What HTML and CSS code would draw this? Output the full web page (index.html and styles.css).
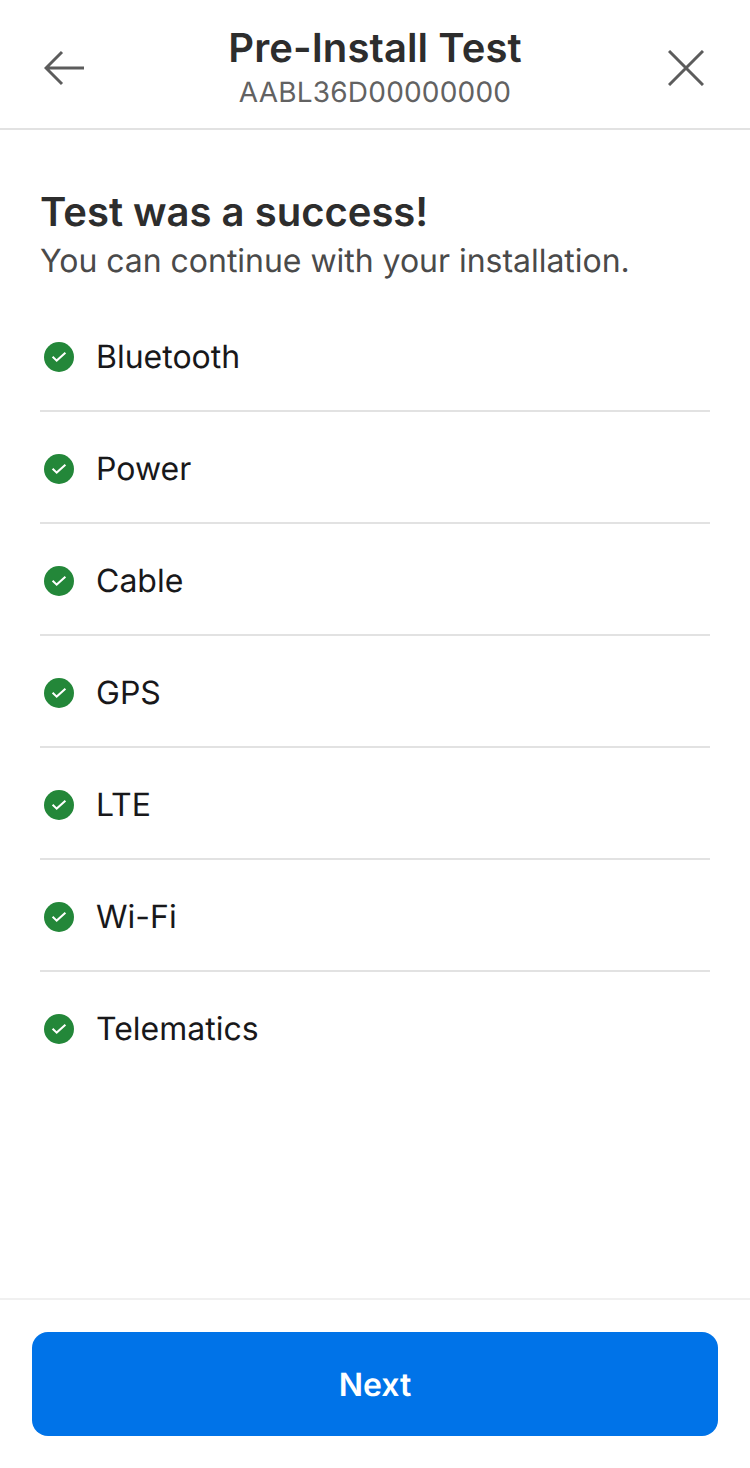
FILE: index.html
```
<!DOCTYPE html>
<html lang="en">
<head>
  <meta charset="UTF-8">
  <meta name="viewport" content="width=device-width, initial-scale=1.0">
  <title>Pre-Install Test</title>
  <link rel="stylesheet" href="styles.css">
</head>
<body>
  <svg class="sprite" width="0" height="0">
    <symbol id="check" viewBox="0 0 30 30">
      <circle cx="15" cy="15" r="15" fill="#238739"/>
      <path d="M8.6 14.7l4.1 3.9L21.4 10.8" fill="none" stroke="#fff" stroke-width="2"/>
    </symbol>
  </svg>

  <header class="header">
    <button class="icon-btn" aria-label="Back">
      <svg width="40" height="36" viewBox="0 0 40 36" fill="none" stroke="#5c5c5c" stroke-width="3">
        <path d="M18 2L2 18l16 16M2 18h38"/>
      </svg>
    </button>
    <div class="heading">
      <h1>Pre-Install Test</h1>
      <p>AABL36D00000000</p>
    </div>
    <button class="icon-btn" aria-label="Close">
      <svg width="36" height="36" viewBox="0 0 36 36" fill="none" stroke="#5c5c5c" stroke-width="3">
        <path d="M1 1l34 34M35 1L1 35"/>
      </svg>
    </button>
  </header>

  <main class="content">
    <h2>Test was a success!</h2>
    <p class="message">You can continue with your installation.</p>
    <ul class="results">
      <li><svg class="check"><use href="#check"/></svg><span>Bluetooth</span></li>
      <li><svg class="check"><use href="#check"/></svg><span>Power</span></li>
      <li><svg class="check"><use href="#check"/></svg><span>Cable</span></li>
      <li><svg class="check"><use href="#check"/></svg><span>GPS</span></li>
      <li><svg class="check"><use href="#check"/></svg><span>LTE</span></li>
      <li><svg class="check"><use href="#check"/></svg><span>Wi-Fi</span></li>
      <li><svg class="check"><use href="#check"/></svg><span>Telematics</span></li>
    </ul>
  </main>

  <footer class="footer">
    <button class="next">Next</button>
  </footer>
</body>
</html>
```
FILE: styles.css
```
* {
  box-sizing: border-box;
  margin: 0;
  padding: 0;
  font-family: Inter, sans-serif;
}

body {
  display: flex;
  flex-direction: column;
  height: 100vh;
  background-color: #fff;
  text-rendering: geometricPrecision;
}

.sprite {
  display: none;
}

.header {
  display: grid;
  grid-template-columns: 1fr auto 1fr;
  align-items: center;
  height: 130px;
  padding: 8px 44px 0;
  border-bottom: 2px solid #e2e2e2;
}

.icon-btn {
  display: flex;
  width: fit-content;
  border: none;
  background: none;
  cursor: pointer;
}

.icon-btn:last-child {
  justify-self: end;
  margin-right: 2px;
}

.heading {
  text-align: center;
}

.heading h1 {
  color: #2d2d2d;
  font-size: 40px;
  font-weight: 600;
  letter-spacing: 0.1px;
  line-height: 48px;
}

.heading p {
  color: #626262;
  font-size: 28px;
  letter-spacing: 0.2px;
  line-height: 40px;
}

.content {
  flex: 1;
  padding: 58px 40px 0;
}

.content h2 {
  color: #2d2d2d;
  font-size: 40px;
  font-weight: 600;
  line-height: 48px;
}

.message {
  padding-top: 1px;
  color: #4a4a4a;
  font-size: 32px;
  letter-spacing: -0.03px;
  line-height: 48px;
}

.results {
  margin-top: 15px;
  list-style: none;
}

.results li {
  display: flex;
  align-items: center;
  gap: 22px;
  height: 112px;
  padding: 4px 0 0 4px;
  color: #18181a;
  font-size: 32px;
  border-bottom: 2px solid #e2e2e2;

  span {
    padding-bottom: 2px;
  }
}

.results li:last-child {
  border-bottom-color: transparent;
}

.check {
  width: 30px;
  height: 30px;
}

.footer {
  height: 170px;
  padding: 32px;
  border-top: 2px solid #f0f0f0;
}

.next {
  width: 100%;
  height: 104px;
  border: none;
  border-radius: 16px;
  background-color: #0073e8;
  color: #fff;
  font-size: 32px;
  font-weight: 600;
  text-rendering: inherit;
  cursor: pointer;
}
```
